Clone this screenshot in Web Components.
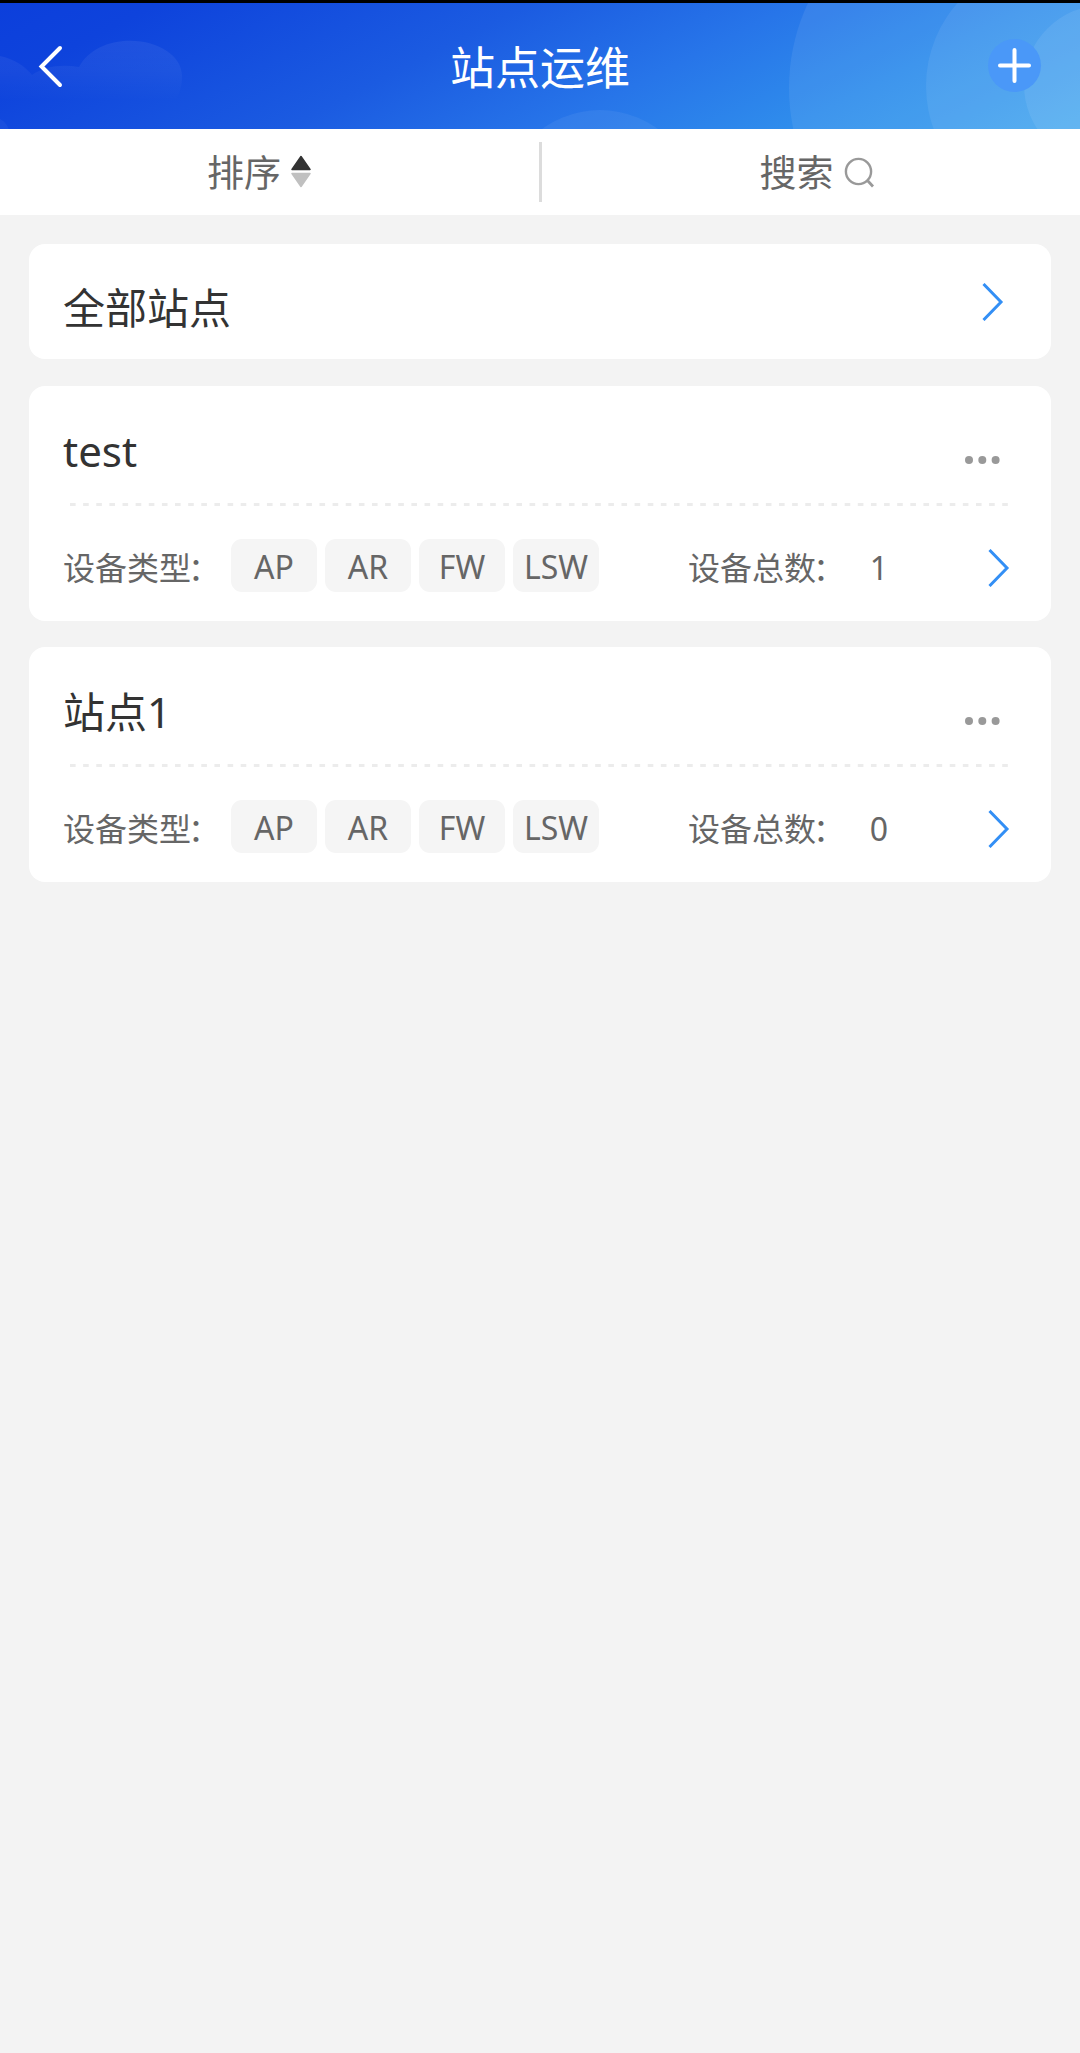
<!DOCTYPE html>
<html lang="zh-CN">
<head>
<meta charset="UTF-8">
<title>站点运维</title>
<style>
  html, body {
    margin: 0;
    padding: 0;
  }

  body {
    background-color: #f3f3f3;
    min-height: 2053px;
    color: #333;
    font-family: "Noto Sans", "Noto Sans CJK SC", sans-serif;
  }

  main {
    display: flex;
    flex-direction: column;
    gap: 26px;
    padding: 29px 29px 0;
  }

  all-sites {
    margin-bottom: 1px;
  }
</style>
</head>
<body>
  <app-header>站点运维</app-header>
  <filter-bar></filter-bar>
  <main>
    <all-sites>全部站点</all-sites>
    <site-card types="AP,AR,FW,LSW" count="1">test</site-card>
    <site-card types="AP,AR,FW,LSW" count="0">站点1</site-card>
  </main>

<script>
class AppHeader extends HTMLElement {
  connectedCallback() {
    this.attachShadow({ mode: 'open' });
    this.shadowRoot.innerHTML = `
      <style>
        :host {
          display: block;
          border-top: 3px solid #000;
        }

        header {
          position: relative;
          display: flex;
          justify-content: space-between;
          align-items: center;
          box-sizing: border-box;
          height: 126px;
          padding: 0 38px;
          overflow: hidden;
          background: linear-gradient(153deg, #0c3fdc 0%, #0e43dc 12%, #1b5be1 40%, #2775e9 60%, #2f8dec 78%, #3ca3ee 100%);
        }

        .decor {
          position: absolute;
          inset: 0;
        }

        .back, h1, .add {
          position: relative;
        }

        h1 {
          margin: 0;
          padding-top: 3px;
          color: #fff;
          font-size: 45px;
          font-weight: 400;
          line-height: 60px;
        }

        svg {
          display: block;
        }
      </style>

      <header>
        <svg class="decor" width="1080" height="126" viewBox="0 3 1080 126">
          <defs>
            <linearGradient id="cloud" x1="0" y1="40" x2="0" y2="100" gradientUnits="userSpaceOnUse">
              <stop offset="0" stop-color="#fff" stop-opacity=".065"/>
              <stop offset=".5" stop-color="#fff" stop-opacity=".045"/>
              <stop offset="1" stop-color="#fff" stop-opacity="0"/>
            </linearGradient>
          </defs>
          <path fill="url(#cloud)" d="M0 56C14 59 25 66 32 75C44 66 62 64 79 67C88 50 108 40.700 130 40.700C159 40.700 182 56 182 76C182 85 180 95 174 102H0Z"/>
          <circle cx="-10" cy="136" r="20" fill="#fff" fill-opacity=".04"/>
          <circle cx="600" cy="208" r="98" fill="#fff" fill-opacity=".06"/>
          <circle cx="989" cy="88" r="200" fill="#fff" fill-opacity=".075"/>
          <circle cx="1051" cy="86" r="125" fill="#fff" fill-opacity=".07"/>
          <circle cx="1104" cy="85" r="80" fill="#fff" fill-opacity=".08"/>
        </svg>
        <svg class="back" width="54" height="54" viewBox="0 0 54 54" fill="none" stroke="#fff" stroke-width="4" stroke-linecap="round" stroke-linejoin="miter">
          <path d="M22 9L3.500 27.500L22 46"/>
        </svg>
        <h1><slot></slot></h1>
        <svg class="add" width="54" height="54" viewBox="0 0 54 54">
          <circle cx="26.500" cy="26.500" r="26.500" fill="#4a98f8"/>
          <path d="M12 26.500H41M26.500 11V42" stroke="#fff" stroke-width="4" stroke-linecap="round"/>
        </svg>
      </header>
    `;
  }
}

class FilterBar extends HTMLElement {
  connectedCallback() {
    this.attachShadow({ mode: 'open' });
    this.shadowRoot.innerHTML = `
      <style>
        :host {
          display: grid;
          grid-template-columns: 1fr 3px 1fr;
          align-items: center;
          height: 86px;
          background-color: #fff;
          color: #666;
          font-size: 37px;
          line-height: 54px;
        }

        .item {
          display: flex;
          align-items: center;
        }

        .item span {
          padding-top: 2px;
        }

        .sort {
          padding-left: 207px;
          gap: 10px;
        }

        .search {
          padding-left: 218px;
          gap: 10px;
        }

        .divider {
          height: 60px;
          background-color: #dcdcdc;
        }
      </style>

      <div class="item sort">
        <span>排序</span>
        <svg width="20" height="34" viewBox="0 0 20 34">
          <path d="M10 1.500L19 14.500H1Z" fill="#333" stroke="#333" stroke-width="1.500" stroke-linejoin="round"/>
          <path d="M10 31.500L19 18.500H1Z" fill="#c0c0c0" stroke="#c0c0c0" stroke-width="1.500" stroke-linejoin="round"/>
        </svg>
      </div>
      <div class="divider"></div>
      <div class="item search">
        <span>搜索</span>
        <svg width="32" height="32" viewBox="0 0 32 32" fill="none" stroke="#999" stroke-width="2.400">
          <circle cx="14.500" cy="15.500" r="12.600"/>
          <path d="M23 24L29 30.500" stroke-width="2.800"/>
        </svg>
      </div>
    `;
  }
}

class ArrowIcon extends HTMLElement {
  connectedCallback() {
    this.attachShadow({ mode: 'open' });
    this.shadowRoot.innerHTML = `
      <style>
        :host {
          display: block;
          width: 22px;
          height: 38px;
        }

        svg {
          display: block;
        }
      </style>
      <svg width="22" height="38" viewBox="0 0 22 38" fill="none" stroke="#338ff5" stroke-width="3">
        <path d="M1.500 1L19 19L1.500 37"/>
      </svg>
    `;
  }
}

class AllSites extends HTMLElement {
  connectedCallback() {
    this.attachShadow({ mode: 'open' });
    this.shadowRoot.innerHTML = `
      <style>
        :host {
          display: flex;
          justify-content: space-between;
          align-items: center;
          box-sizing: border-box;
          height: 115px;
          padding: 0 47px 0 34px;
          border-radius: 16px;
          background-color: #fff;
          font-size: 42px;
          line-height: 60px;
        }

        .name {
          padding-top: 13px;
        }
      </style>
      <span class="name"><slot></slot></span>
      <arrow-icon></arrow-icon>
    `;
  }
}

class SiteCard extends HTMLElement {
  connectedCallback() {
    const tags = this.getAttribute('types').split(',')
      .map(type => `<span class="tag">${type}</span>`)
      .join('');

    this.attachShadow({ mode: 'open' });
    this.shadowRoot.innerHTML = `
      <style>
        :host {
          display: block;
          box-sizing: border-box;
          height: 235px;
          border-radius: 16px;
          background-color: #fff;
        }

        .title {
          display: flex;
          justify-content: space-between;
          align-items: center;
          height: 117px;
          padding: 0 49px 0 34px;
          font-size: 42px;
          line-height: 60px;
        }

        .name {
          padding-top: 13px;
        }

        .more {
          padding-top: 31px;
        }

        .line {
          display: block;
          margin-left: 41px;
        }

        .info {
          display: flex;
          align-items: center;
          height: 53px;
          padding: 33px 41px 0 34px;
          color: #666;
          font-size: 32px;
          line-height: 48px;
        }

        .label {
          width: 168px;
        }

        .label, .total, .count, arrow-icon {
          padding-top: 4px;
        }

        .colon {
          margin-left: -3px;
        }

        .tags {
          display: flex;
          gap: 8px;
          width: 457px;
        }

        .tag {
          width: 86px;
          height: 53px;
          border-radius: 11px;
          background-color: #f5f5f5;
          line-height: 56px;
          text-align: center;
        }

        .total {
          width: 163px;
        }

        .count {
          width: 56px;
          text-align: center;
        }

        arrow-icon {
          margin-left: auto;
        }
      </style>

      <div class="title">
        <span class="name"><slot></slot></span>
        <svg class="more" width="40" height="12" viewBox="0 0 40 12" fill="#999">
          <circle cx="7" cy="6" r="4"/>
          <circle cx="20.300" cy="6" r="4"/>
          <circle cx="33.600" cy="6" r="4"/>
        </svg>
      </div>
      <svg class="line" width="940" height="3">
        <path d="M0 1.500H938" stroke="#ececec" stroke-width="3" stroke-dasharray="5.600 7.530"/>
      </svg>
      <div class="info">
        <span class="label">设备类型<span class="colon">：</span></span>
        <div class="tags">${tags}</div>
        <span class="total">设备总数<span class="colon">：</span></span>
        <span class="count">${this.getAttribute('count')}</span>
        <arrow-icon></arrow-icon>
      </div>
    `;
  }
}

customElements.define('app-header', AppHeader);
customElements.define('filter-bar', FilterBar);
customElements.define('arrow-icon', ArrowIcon);
customElements.define('all-sites', AllSites);
customElements.define('site-card', SiteCard);
</script>
</body>
</html>
